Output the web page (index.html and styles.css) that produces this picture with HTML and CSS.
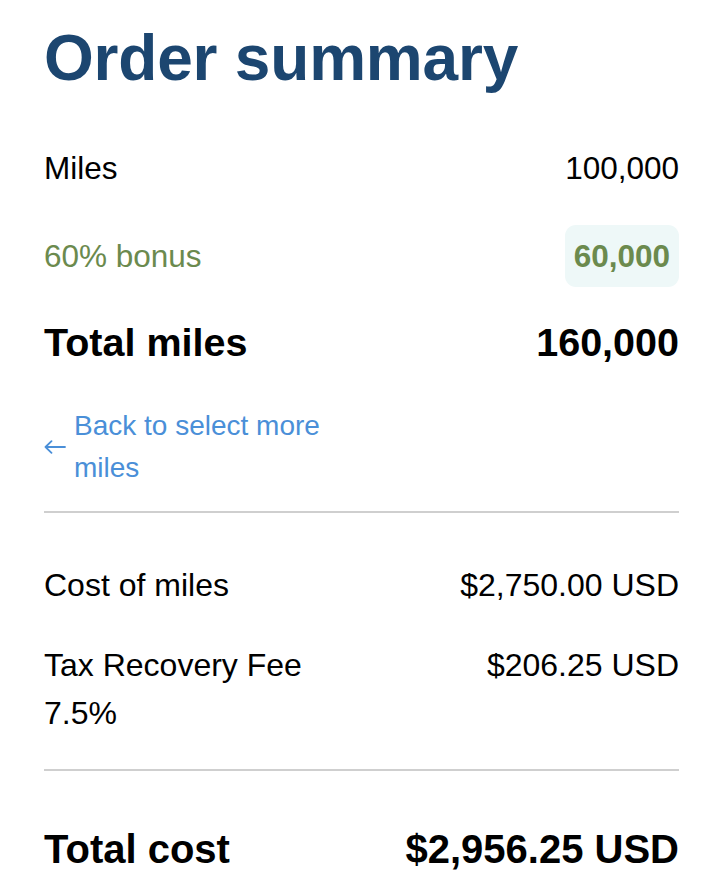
FILE: index.html
```html
<!DOCTYPE html>
<html lang="en">
<head>
<meta charset="utf-8">
<title>Order summary</title>
<link rel="stylesheet" href="styles.css">
</head>
<body>
<main class="summary">
  <h1 class="title">Order summary</h1>

  <div class="rows">
    <div class="row">
      <span class="label">Miles</span>
      <span class="value">100,000</span>
    </div>
    <div class="row bonus">
      <span class="label">60% bonus</span>
      <span class="value badge">60,000</span>
    </div>
    <div class="row total">
      <span class="label">Total miles</span>
      <span class="value">160,000</span>
    </div>
  </div>

  <a class="back" href="#">
    <svg class="arrow" width="22" height="14" viewBox="0 0 22 14" aria-hidden="true">
      <path d="M21 7H1.5M7.5 1.2L1.5 7l6 5.8" fill="none" stroke="currentColor" stroke-width="1.8" stroke-linecap="round" stroke-linejoin="round"/>
    </svg>
    <span class="back-text">Back to select more miles</span>
  </a>

  <hr class="divider">

  <div class="costs">
    <div class="cost-row">
      <span class="cost-label">Cost of miles</span>
      <span class="cost-value">$2,750.00 USD</span>
    </div>
    <div class="cost-row">
      <span class="cost-label">Tax Recovery Fee 7.5%</span>
      <span class="cost-value">$206.25 USD</span>
    </div>
  </div>

  <hr class="divider">

  <div class="grand">
    <span class="grand-label">Total cost</span>
    <span class="grand-value">$2,956.25 USD</span>
  </div>
</main>
</body>
</html>
```

FILE: styles.css
```css
* {
  box-sizing: border-box;
}

html, body {
  margin: 0;
  padding: 0;
  background: #ffffff;
}

body {
  font-family: "Liberation Sans", Arial, Helvetica, sans-serif;
  color: #000000;
}

.summary {
  padding: 21px 37px 0 44px;
  display: flex;
  flex-direction: column;
}

.title {
  margin: 0;
  font-size: 64px;
  line-height: 74px;
  font-weight: 700;
  color: #1c4670;
  letter-spacing: -0.2px;
}

.rows {
  margin-top: 42px;
  display: flex;
  flex-direction: column;
  gap: 25px;
}

.row {
  min-height: 62px;
  display: flex;
  justify-content: space-between;
  align-items: center;
  font-size: 31.5px;
}

.bonus {
  color: #6b8a4e;
  transform: translateY(1px);
}

.badge {
  font-weight: 700;
  background: #eef8f8;
  border-radius: 11px;
  padding: 0 9px;
  height: 62px;
  display: flex;
  align-items: center;
}

.total {
  font-size: 39.5px;
  font-weight: 700;
}

.back {
  margin-top: 32px;
  display: flex;
  align-items: center;
  gap: 8px;
  color: #4a8fd8;
  text-decoration: none;
  font-size: 28px;
  line-height: 42px;
}

.arrow {
  flex: none;
  display: block;
}

.back-text {
  max-width: 260px;
}

.divider {
  margin: 22px 0 0 0;
  border: 0;
  height: 2px;
  background: #cfcfcf;
}

.costs {
  margin-top: 48px;
  display: flex;
  flex-direction: column;
  gap: 32px;
}

.cost-row {
  display: flex;
  justify-content: space-between;
  align-items: flex-start;
  font-size: 32px;
  line-height: 48px;
}

.cost-label {
  width: 50%;
}

.cost-value {
  width: 50%;
  text-align: right;
}

.costs + .divider {
  margin-top: 32px;
}

.grand {
  margin-top: 54px;
  display: flex;
  justify-content: space-between;
  font-size: 40px;
  font-weight: 700;
  line-height: 48px;
}
```
